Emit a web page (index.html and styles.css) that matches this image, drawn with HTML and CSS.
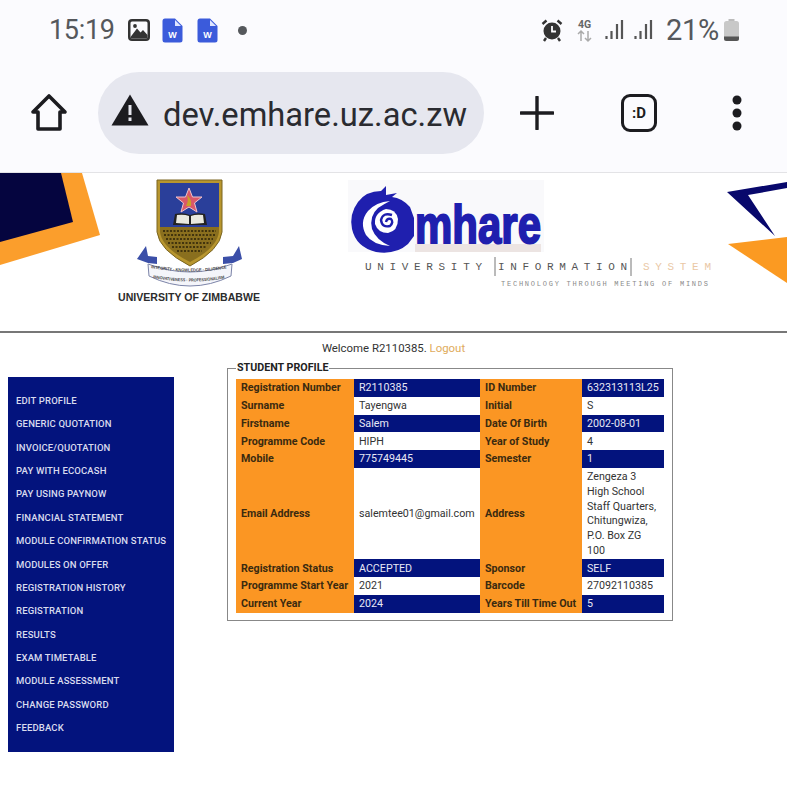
FILE: index.html
```html
<!DOCTYPE html>
<html lang="en">
<head>
<meta charset="utf-8">
<title>Student Profile</title>
<link rel="stylesheet" href="styles.css">
</head>
<body>
<header class="chrome">
  <div class="status">
    <div class="status-left">
      <span class="clock">15:19</span>
      <svg class="ic" width="24" height="24" viewBox="0 0 24 24"><rect x="1" y="1" width="22" height="22" rx="4" fill="#333"/><rect x="3.500" y="3.500" width="17" height="17" rx="1.500" fill="#fbfbfe"/><path d="M3.500 19 L10 10.500 L13.500 14.500 L16 12 L20.500 17 V20.500 H3.500Z" fill="#333"/><circle cx="8" cy="8" r="1.900" fill="#333"/></svg>
      <svg class="doc" width="21" height="25" viewBox="0 0 21 25"><path d="M3 0.500 H13 L20.500 8 V22 Q20.500 24.500 18 24.500 H3 Q0.500 24.500 0.500 22 V3 Q0.500 0.500 3 0.500Z" fill="#3b5bdb"/><path d="M13 2 V8 H19Z" fill="#dfe6ff"/><text x="10.500" y="20" class="doc-w">W</text></svg>
      <svg class="doc" width="21" height="25" viewBox="0 0 21 25"><path d="M3 0.500 H13 L20.500 8 V22 Q20.500 24.500 18 24.500 H3 Q0.500 24.500 0.500 22 V3 Q0.500 0.500 3 0.500Z" fill="#3b5bdb"/><path d="M13 2 V8 H19Z" fill="#dfe6ff"/><text x="10.500" y="20" class="doc-w">W</text></svg>
      <span class="dot"></span>
    </div>
    <div class="status-right">
      <svg width="22" height="24" viewBox="0 0 22 24"><circle cx="11" cy="13" r="8.500" fill="#333"/><path d="M11 8 V13.500 H15" fill="none" stroke="#fbfbfe" stroke-width="1.800"/><path d="M1.500 6 L5.500 2.500 M20.500 6 L16.500 2.500 M5 20 L3 23 M17 20 L19 23" stroke="#333" stroke-width="2.400"/></svg>
      <svg class="net" width="17" height="26" viewBox="0 0 17 26"><text x="8.500" y="11" class="net-t">4G</text><path d="M5 24 V14 M2 17 L5 14 L8 17" fill="none" stroke="#aaa" stroke-width="1.500"/><path d="M12 14 V24 M9 21 L12 24 L15 21" fill="none" stroke="#aaa" stroke-width="1.500"/></svg>
      <svg class="bars" width="19" height="24" viewBox="0 0 19 24"><path d="M1.500 21 V18 M6.500 21 V13 M12 21 V6 M17 21 V2" stroke="#555" stroke-width="2.200"/></svg>
      <svg class="bars" width="19" height="24" viewBox="0 0 19 24"><path d="M1.500 21 V18 M6.500 21 V13 M12 21 V6 M17 21 V2" stroke="#555" stroke-width="2.200"/></svg>
      <span class="pct">21%</span>
      <svg class="batt" width="17" height="24" viewBox="0 0 17 24"><rect x="5.500" y="1" width="6" height="3" fill="#bbb"/><rect x="1" y="3" width="15" height="20" rx="2.500" fill="#c8c8c8"/><path d="M1 18.500 H16 V20.500 Q16 23 13.500 23 H3.500 Q1 23 1 20.500Z" fill="#555"/></svg>
    </div>
  </div>
  <div class="toolbar">
    <svg class="home" width="38" height="40" viewBox="0 0 38 40"><path d="M19 3 L35 19 H30 V36 H8 V19 H3Z" fill="none" stroke="#1c1c20" stroke-width="3.600" stroke-linejoin="round"/></svg>
    <div class="omnibox">
      <svg class="warn" width="38" height="32" viewBox="0 0 38 32"><path d="M19 0.500 L37.500 31.500 H0.500Z" fill="#1c1c20"/><rect x="17.500" y="11" width="3" height="10" fill="#e6e7ef"/><rect x="17.500" y="23.500" width="3" height="3.500" fill="#e6e7ef"/></svg>
      <span class="url">dev.emhare.uz.ac.zw</span>
    </div>
    <svg class="plus" width="34" height="34" viewBox="0 0 34 34"><path d="M1 17 H33 M17 1 V33" stroke="#1c1c20" stroke-width="3.400" stroke-linecap="round"/></svg>
    <div class="tabs">:D</div>
    <svg class="menu" width="10" height="36" viewBox="0 0 10 36"><circle cx="5" cy="5" r="4.500" fill="#1c1c20"/><circle cx="5" cy="18" r="4.500" fill="#1c1c20"/><circle cx="5" cy="31" r="4.500" fill="#1c1c20"/></svg>
  </div>
</header>

<div class="banner">
<svg class="banner-art" width="787" height="158" viewBox="0 173 787 158">
  <path d="M61 173 H82 L100 235 L0 265 V173Z" fill="#fb9e2c"/>
  <path d="M0 173 H61 L73 222 L0 242Z" fill="#05053f"/>
  <path d="M727 192 L787 182 V188 L748 195 L775 236Z" fill="#08086c"/>
  <path d="M728 244 L787 237 V283Z" fill="#fb9a22"/>

  <!-- UZ crest -->
  <path d="M157 180 H222 V232 Q220 250 190 266 Q159 250 157 232Z" fill="#b8962e" stroke="#7a6420" stroke-width="1"/>
  <path d="M160 183 H219 V227 H160Z" fill="#2a3f9a"/>
  <path d="M160 227 H219 V232 Q217 248 190 262 Q162 248 160 232Z" fill="#8a6f1e"/>
  <path d="M163 231 H216 M164 235 H215 M166 239 H213 M168 243 H211 M172 247 H207 M177 251 H202" stroke="#2b2208" stroke-width="1.400" stroke-dasharray="2 1.500"/>
  <path d="M189 188 L192.500 197 L202 197 L194.500 203 L197 212 L189 207 L181 212 L183.500 203 L176 197 L185.500 197Z" fill="#d9586a" stroke="#eec4cc" stroke-width="1"/>
  <path d="M187 195 Q192 199 191 206 L186 206 Q189 201 187 195Z" fill="#c9a227"/>
  <path d="M173 225 L175 214 Q183 212 190 215 Q197 212 205 214 L207 225Z" fill="#222"/>
  <path d="M176 223 L177 215 Q184 214 189 216 V224Z M191 216 Q196 214 203 215 L204 223 L191 224Z" fill="#e9e9df"/>
  <path d="M137 259 L146 246 L148 256 L157 257 L157 264 L148 263Z M242 259 L239 246 L233 256 L223 257 L223 264 L233 263Z" fill="#3b4fa8"/>
  <path d="M148 264 Q190 280 232 264 L231 276 Q190 296 149 276Z" fill="#f4f5fa" stroke="#7c84a8" stroke-width="1"/>
  <path id="m1" d="M151 268 Q190 275 229 268" fill="none"/>
  <path id="m2" d="M153 278 Q190 285 227 278" fill="none"/>
  <text class="motto"><textPath href="#m1" textLength="76" lengthAdjust="spacingAndGlyphs">INTEGRITY · KNOWLEDGE · DILIGENCE</textPath></text>
  <text class="motto"><textPath href="#m2" textLength="72" lengthAdjust="spacingAndGlyphs">INNOVATIVENESS · PROFESSIONALISM</textPath></text>
  <text class="uz" x="118" y="301" textLength="142" lengthAdjust="spacingAndGlyphs">UNIVERSITY OF ZIMBABWE</text>

  <!-- emhare logo -->
  <rect x="348" y="180" width="196" height="72" fill="#f9f9fb"/>
  <rect x="415" y="244" width="126" height="8" fill="#ece4e2"/>
  <path d="M386 186 L381 191 Q366 191 358 202 Q349 214 352 229 Q356 247 376 252 Q396 255 408 244 L414 236 L414 218 L410 207 Q402 198 392 197 L397 193 L386 195Z" fill="#1f1fae"/>
  <path d="M390 201 Q376 202 368 211 Q359 222 366 235 Q373 245 390 246 Q376 240 372 229 Q369 216 378 208 Q384 204 390 201Z" fill="#fff"/>
  <path d="M386 209 Q396 209 398 219 Q398 231 388 233 Q378 233 375 224 Q374 213 386 209Z" fill="#fff"/>
  <path d="M392 215 Q383 212 381 220 Q382 228 390 226 Q394 222 391 219 Q387 218 386 222" fill="none" stroke="#1f1fae" stroke-width="2.400"/>
  <text class="mhare" x="415" y="243" textLength="126" lengthAdjust="spacingAndGlyphs">mhare</text>
  <text class="track gray" x="365" y="270" textLength="117">UNIVERSITY</text>
  <path d="M495 257 V276 M631 258 V276" stroke="#777" stroke-width="1"/>
  <text class="track gray" x="498" y="270" textLength="129">INFORMATION</text>
  <text class="track peach" x="643" y="270" textLength="68">SYSTEM</text>
  <text class="tagline" x="501" y="286" textLength="207">TECHNOLOGY THROUGH MEETING OF MINDS</text>
</svg>
</div>

<main class="page">
  <p class="welcome">Welcome R2110385. <a class="logout" href="#">Logout</a></p>
  <div class="columns">
    <nav class="side">
      <a href="#">EDIT PROFILE</a>
      <a href="#">GENERIC QUOTATION</a>
      <a href="#">INVOICE/QUOTATION</a>
      <a href="#">PAY WITH ECOCASH</a>
      <a href="#">PAY USING PAYNOW</a>
      <a href="#">FINANCIAL STATEMENT</a>
      <a href="#">MODULE CONFIRMATION STATUS</a>
      <a href="#">MODULES ON OFFER</a>
      <a href="#">REGISTRATION HISTORY</a>
      <a href="#">REGISTRATION</a>
      <a href="#">RESULTS</a>
      <a href="#">EXAM TIMETABLE</a>
      <a href="#">MODULE ASSESSMENT</a>
      <a href="#">CHANGE PASSWORD</a>
      <a href="#">FEEDBACK</a>
    </nav>
    <fieldset class="profile">
      <legend>STUDENT PROFILE</legend>
      <table>
        <colgroup><col class="c1"><col class="c2"><col class="c3"><col class="c4"></colgroup>
        <tr class="odd"><th>Registration Number</th><td>R2110385</td><th>ID Number</th><td>632313113L25</td></tr>
        <tr><th>Surname</th><td>Tayengwa</td><th>Initial</th><td>S</td></tr>
        <tr class="odd"><th>Firstname</th><td>Salem</td><th>Date Of Birth</th><td>2002-08-01</td></tr>
        <tr><th>Programme Code</th><td>HIPH</td><th>Year of Study</th><td>4</td></tr>
        <tr class="odd"><th>Mobile</th><td>775749445</td><th>Semester</th><td>1</td></tr>
        <tr><th>Email Address</th><td>salemtee01@gmail.com</td><th>Address</th><td>Zengeza 3 High School Staff Quarters, Chitungwiza, P.O. Box ZG 100</td></tr>
        <tr class="odd"><th>Registration Status</th><td>ACCEPTED</td><th>Sponsor</th><td>SELF</td></tr>
        <tr><th>Programme Start Year</th><td>2021</td><th>Barcode</th><td>27092110385</td></tr>
        <tr class="odd"><th>Current Year</th><td>2024</td><th>Years Till Time Out</th><td>5</td></tr>
      </table>
    </fieldset>
  </div>
</main>
</body>
</html>
```
FILE: styles.css
```css
* { box-sizing: border-box; }
html, body { margin: 0; background: #fff; }
body { width: 787px; height: 800px; overflow: hidden; font-family: Roboto, "Liberation Sans", sans-serif; color: #333; }

.chrome { background: #fbfbfe; height: 172px; padding-top: 14px; }
.status { display: flex; justify-content: space-between; align-items: center; height: 32px; padding: 0 47px 0 49px; }
.status-left, .status-right { display: flex; align-items: center; }
.clock { font: 400 27px Roboto, sans-serif; color: #55585c; margin-right: 12px; letter-spacing: -0.3px; }
.ic { margin-right: 11px; }
.doc { margin-right: 14px; }
.doc-w { font: 700 9px "Liberation Sans", sans-serif; fill: #fff; text-anchor: middle; }
.dot { width: 9px; height: 9px; border-radius: 50%; background: #55585c; margin-left: 6px; }
.net { margin: 0 12px 0 13px; }
.net-t { font: 700 10.500px Roboto, sans-serif; fill: #666; text-anchor: middle; }
.bars { margin-right: 10px; }
.pct { font: 400 29px Roboto, sans-serif; color: #55585c; letter-spacing: -0.3px; margin-left: 3px; }
.batt { margin-left: 4px; }

.toolbar { display: flex; align-items: center; height: 82px; margin-top: 26px; padding-left: 30px; }
.home { flex: none; }
.omnibox { display: flex; align-items: center; gap: 14px; width: 386px; height: 82px; margin-left: 30px; padding-left: 13px; border-radius: 41px; background: #e6e7ef; }
.warn { margin-top: -6px; }
.url { padding-top: 3px; font: 400 32.700px Roboto, sans-serif; color: #2a2b30; white-space: nowrap; }
.plus { margin-left: 36px; flex: none; }
.tabs { display: flex; align-items: center; justify-content: center; width: 36px; height: 38px; margin-left: 67px; border: 3.500px solid #1c1c20; border-radius: 9px; font: 700 15px Roboto, sans-serif; color: #1c1c20; flex: none; }
.menu { margin-left: 75px; flex: none; }

.banner { height: 161px; border-top: 1px solid #e3e3e6; border-bottom: 2px solid #777; }
.banner-art { display: block; }
.motto { font: 700 4.300px "Liberation Sans", sans-serif; fill: #444; }
.uz { font: 700 10.500px "Liberation Sans", sans-serif; fill: #2c2c2c; }
.mhare { font: 700 54px "Liberation Sans", sans-serif; fill: #1f1fae; stroke: #1f1fae; stroke-width: 2px; }
.track { font: 400 11px "Liberation Mono", monospace; }
.gray { fill: #555; }
.peach { fill: #eac8a6; }
.tagline { font: 400 7px "Liberation Mono", monospace; fill: #8a8a8a; }

.page { height: 467px; padding-top: 8px; }
.welcome { margin: 0; height: 15px; font-size: 11.400px; line-height: 15px; text-align: center; color: #333; }
.logout { color: #e0ab5c; text-decoration: none; }
.columns { display: flex; align-items: flex-start; padding: 7px 0 0 8px; }

.side { display: flex; flex-direction: column; width: 166px; height: 375px; margin-top: 14px; padding: 12px 0 0 8px; background: #03137d; }
.side a { display: block; height: 23.360px; font: 500 9.500px/23.360px Roboto, sans-serif; letter-spacing: 0.150px; color: #d9dbee; text-decoration: none; white-space: nowrap; }

.profile { width: 445px; margin: -1px 0 0 53px; padding: 5px 8px 7px 8px; border: 1px solid #888; }
.profile legend { padding: 0 1px; margin-left: 0; font: 700 10.700px/12px Roboto, sans-serif; color: #222; }
.profile table { width: 428px; table-layout: fixed; border-collapse: collapse; font-size: 10.700px; line-height: 14.700px; }
.c1 { width: 118px; } .c2 { width: 126px; } .c3 { width: 102px; } .c4 { width: 82px; }
.profile th, .profile td { padding: 2.300px 5px 0.800px; text-align: left; vertical-align: middle; }
.profile th { background: #fb9623; color: #3a2a10; font-weight: 700; white-space: nowrap; }
.profile td { background: #fff; color: #333; }
.profile .odd td { background: #03137d; color: #e8e9f5; }
```
